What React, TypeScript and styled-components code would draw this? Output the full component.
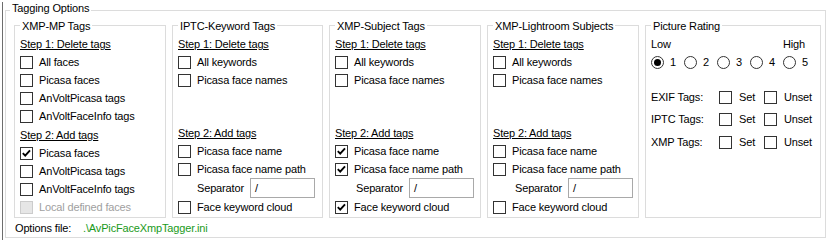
import React from "react";
import styled, { createGlobalStyle } from "styled-components";

const GlobalStyle = createGlobalStyle`
  html, body { margin: 0; padding: 0; background: #ffffff; }
  body {
    font-family: "Liberation Sans", Arial, sans-serif;
    font-size: 11px;
    letter-spacing: -0.15px;
    color: #000000;
  }
`;

const Page = styled.div`
  margin-left: 2px;
  border-left: 1px solid #6d6d6d;
  padding-left: 2px;
  width: 821px;
  height: 238px;
`;

const OuterGroup = styled.fieldset`
  margin: 2px 0 0 0;
  padding: 0;
  border: 1px solid #dcdcdc;
  min-inline-size: 0;
  box-sizing: border-box;
  width: 821px;
`;

const OuterLegend = styled.legend`
  margin-left: 4px;
  padding: 0 2px 3px 2px;
  line-height: 13px;
`;

const OuterBody = styled.div`
  display: flex;
  flex-direction: column;
  padding: 0 4px 0 8px;
`;

const Columns = styled.div`
  display: flex;
  gap: 6px;
  margin-top: -1px;
`;

const Box = styled.fieldset<{ $w: number }>`
  margin: 0;
  padding: 0;
  border: 1px solid #dcdcdc;
  min-inline-size: 0;
  box-sizing: border-box;
  width: ${(p) => p.$w}px;
  flex: none;
`;

const BoxLegend = styled.legend`
  margin-left: 5px;
  padding: 3px 2px 0 2px;
  line-height: 13px;
`;

const BoxBody = styled.div`
  display: flex;
  flex-direction: column;
  padding: 2px 0 1px 5px;
`;

const StepLabel = styled.div<{ $mt?: number }>`
  height: 18px;
  line-height: 18px;
  text-decoration: underline;
  margin-top: ${(p) => p.$mt ?? 0}px;
  white-space: nowrap;
`;

const CheckRow = styled.label<{ $disabled?: boolean; $gap?: number }>`
  display: flex;
  align-items: center;
  gap: ${(p) => p.$gap ?? 6}px;
  height: 18px;
  white-space: nowrap;
  color: ${(p) => (p.$disabled ? "#a0a0a0" : "#000000")};
`;

const CheckBoxSquare = styled.span<{ $disabled?: boolean }>`
  display: inline-flex;
  align-items: center;
  justify-content: center;
  width: 13px;
  height: 13px;
  box-sizing: border-box;
  flex: none;
  border: 1px solid ${(p) => (p.$disabled ? "#cccccc" : "#333333")};
  background: ${(p) => (p.$disabled ? "#e6e6e6" : "#ffffff")};
`;

const SeparatorRow = styled.div<{ $indent: number }>`
  display: flex;
  align-items: center;
  height: 20px;
  padding-left: ${(p) => p.$indent}px;
  white-space: nowrap;
`;

const SeparatorLabel = styled.span`
  width: 53px;
  flex: none;
`;

const TextInput = styled.div`
  width: 65px;
  height: 20px;
  box-sizing: border-box;
  border: 1px solid #a9a9a9;
  padding-left: 4px;
  line-height: 18px;
`;

const OptionsRow = styled.div`
  display: flex;
  align-items: center;
  height: 19px;
  padding-left: 1px;
  white-space: nowrap;
`;

const OptionsLabel = styled.span`
  width: 68px;
  flex: none;
`;

const OptionsValue = styled.span`
  color: #1a9a1a;
`;

const RatingGrid = styled.div<{ $mt?: number }>`
  display: grid;
  grid-template-columns: repeat(5, 33px);
  height: 18px;
  align-items: center;
  margin-top: ${(p) => p.$mt ?? 0}px;
  white-space: nowrap;
`;

const RadioItem = styled.label`
  display: flex;
  align-items: center;
  gap: 6px;
`;

const RadioCircle = styled.span`
  display: inline-flex;
  align-items: center;
  justify-content: center;
  width: 13px;
  height: 13px;
  box-sizing: border-box;
  border: 1px solid #333333;
  border-radius: 50%;
  background: #ffffff;
  flex: none;
`;

const RadioDot = styled.span`
  width: 7px;
  height: 7px;
  border-radius: 50%;
  background: #000000;
`;

const TagRow = styled.div<{ $mt: number }>`
  display: grid;
  grid-template-columns: 68px 45px auto;
  align-items: center;
  height: 18px;
  margin-top: ${(p) => p.$mt}px;
  white-space: nowrap;
`;

const CheckMark = () => (
  <svg width="11" height="11" viewBox="0 0 11 11">
    <polyline
      points="1.8,5.2 4.2,7.7 9,2.4"
      fill="none"
      stroke="#000"
      strokeWidth="1.9"
    />
  </svg>
);

const Check: React.FC<{
  label: string;
  checked?: boolean;
  disabled?: boolean;
  gap?: number;
}> = ({ label, checked, disabled, gap }) => (
  <CheckRow $disabled={disabled} $gap={gap}>
    <CheckBoxSquare $disabled={disabled}>{checked && <CheckMark />}</CheckBoxSquare>
    <span>{label}</span>
  </CheckRow>
);

const Radio: React.FC<{ label: string; checked?: boolean }> = ({ label, checked }) => (
  <RadioItem>
    <RadioCircle>{checked && <RadioDot />}</RadioCircle>
    <span>{label}</span>
  </RadioItem>
);

type KeywordBoxProps = {
  title: string;
  width: number;
  checks: [boolean, boolean, boolean];
  sepIndent: number;
};

const KeywordBox: React.FC<KeywordBoxProps> = ({ title, width, checks, sepIndent }) => (
  <Box $w={width}>
    <BoxLegend>{title}</BoxLegend>
    <BoxBody>
      <StepLabel>Step 1: Delete tags</StepLabel>
      <Check label="All keywords" />
      <Check label="Picasa face names" />
      <StepLabel $mt={35}>Step 2: Add tags</StepLabel>
      <Check label="Picasa face name" checked={checks[0]} />
      <Check label="Picasa face name path" checked={checks[1]} />
      <SeparatorRow $indent={sepIndent}>
        <SeparatorLabel>Separator</SeparatorLabel>
        <TextInput>/</TextInput>
      </SeparatorRow>
      <Check label="Face keyword cloud" checked={checks[2]} />
    </BoxBody>
  </Box>
);

const TagSetRow: React.FC<{ label: string; mt: number }> = ({ label, mt }) => (
  <TagRow $mt={mt}>
    <span>{label}</span>
    <Check label="Set" gap={7} />
    <Check label="Unset" gap={7} />
  </TagRow>
);

export default function App() {
  return (
    <>
      <GlobalStyle />
      <Page>
        <OuterGroup>
          <OuterLegend>Tagging Options</OuterLegend>
          <OuterBody>
            <Columns>
              <Box $w={152}>
                <BoxLegend>XMP-MP Tags</BoxLegend>
                <BoxBody>
                  <StepLabel>Step 1: Delete tags</StepLabel>
                  <Check label="All faces" />
                  <Check label="Picasa faces" />
                  <Check label="AnVoltPicasa tags" />
                  <Check label="AnVoltFaceInfo tags" />
                  <StepLabel $mt={1}>Step 2: Add tags</StepLabel>
                  <Check label="Picasa faces" checked />
                  <Check label="AnVoltPicasa tags" />
                  <Check label="AnVoltFaceInfo tags" />
                  <Check label="Local defined faces" disabled />
                </BoxBody>
              </Box>
              <KeywordBox title="IPTC-Keyword Tags" width={151} checks={[false, false, false]} sepIndent={19} />
              <KeywordBox title="XMP-Subject Tags" width={152} checks={[true, true, true]} sepIndent={21} />
              <KeywordBox title="XMP-Lightroom Subjects" width={152} checks={[false, false, false]} sepIndent={22} />
              <Box $w={176}>
                <BoxLegend>Picture Rating</BoxLegend>
                <BoxBody>
                  <RatingGrid>
                    <span>Low</span>
                    <span />
                    <span />
                    <span />
                    <span>High</span>
                  </RatingGrid>
                  <RatingGrid>
                    <Radio label="1" checked />
                    <Radio label="2" />
                    <Radio label="3" />
                    <Radio label="4" />
                    <Radio label="5" />
                  </RatingGrid>
                  <TagSetRow label="EXIF Tags:" mt={17} />
                  <TagSetRow label="IPTC Tags:" mt={4} />
                  <TagSetRow label="XMP Tags:" mt={5} />
                </BoxBody>
              </Box>
            </Columns>
            <OptionsRow>
              <OptionsLabel>Options file:</OptionsLabel>
              <OptionsValue>.\AvPicFaceXmpTagger.ini</OptionsValue>
            </OptionsRow>
          </OuterBody>
        </OuterGroup>
      </Page>
    </>
  );
}
